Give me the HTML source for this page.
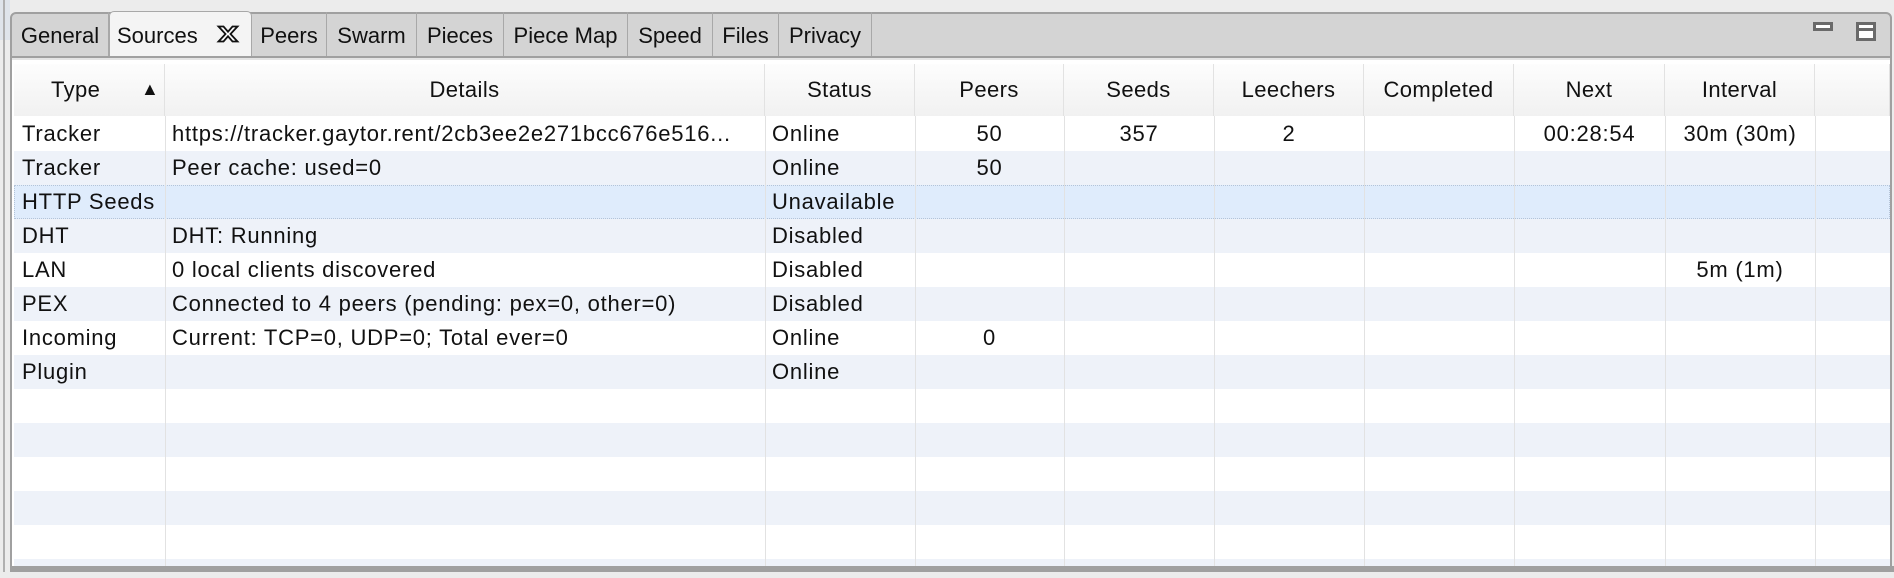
<!DOCTYPE html>
<html><head><meta charset="utf-8"><style>
body{margin:0;width:1894px;height:578px;background:#ececec;position:relative;overflow:hidden;font-family:"Liberation Sans",sans-serif;color:#111}
.abs{position:absolute}
#frame{left:10px;top:12px;width:1882px;height:559px;background:#d4d4d4;border:2px solid #a0a0a0;border-radius:6px 6px 0 0;box-sizing:border-box}
.tab{position:absolute;top:12px;height:45px;border-right:1px solid #a8a8a8;font-size:22px;line-height:48px;text-align:center;box-sizing:border-box}
.sel{background:#f4f4f4;border:1px solid #a8a8a8;border-bottom:none;border-radius:5px 5px 0 0;height:47px}
#panel{left:12px;top:58px;width:1878px;height:510px;background:#fff;border-top:2px solid #e4e4e4}
.row{position:absolute;left:14px;width:1876px;height:34px}
.cell{position:absolute;top:0;height:34px;line-height:34px;font-size:22px;letter-spacing:0.75px;white-space:nowrap}
.hd{position:absolute;top:64px;height:52px;line-height:52px;font-size:22px;letter-spacing:0.4px;text-align:center;background:linear-gradient(#fdfdfd,#f1f1f1);border-right:1px solid #e2e2e2;box-sizing:border-box}
.vl{position:absolute;top:116px;height:450px;width:1px;background:#e2e2e2}
</style></head><body>
<div class="abs" style="left:0;top:0;width:10px;height:40px;background:#dfe4ea"></div>
<div class="abs" style="left:3px;top:0;width:2px;height:578px;background:#b0b0b0"></div>
<div class="abs" id="frame"></div>
<div class="tab" style="left:12px;width:97px">General</div>
<div class="tab sel" style="left:109px;width:143px;top:11px;text-align:left;padding-left:7px">Sources</div>
<svg class="abs" style="left:216px;top:24px" width="24" height="20" viewBox="0 0 24 20"><path d="M2.5 2.5h5l4.5 5.2 4.5-5.2h5l-7 7.5 7 7.5h-5l-4.5-5.2-4.5 5.2h-5l7-7.5z" fill="#fff" stroke="#111" stroke-width="1.8" stroke-linejoin="miter"/></svg>
<div class="tab" style="left:252px;width:75px">Peers</div>
<div class="tab" style="left:327px;width:90px">Swarm</div>
<div class="tab" style="left:417px;width:87px">Pieces</div>
<div class="tab" style="left:504px;width:124px">Piece Map</div>
<div class="tab" style="left:628px;width:85px">Speed</div>
<div class="tab" style="left:713px;width:66px">Files</div>
<div class="tab" style="left:779px;width:93px">Privacy</div>
<div class="abs" style="left:1813px;top:22px;width:14px;height:3px;border:3px solid #6a6a6a;background:#fff"></div>
<div class="abs" style="left:1856px;top:22px;width:14px;height:13px;border:3px solid #6a6a6a;background:#fff;box-shadow:inset 0 3px 0 #fff,inset 0 6px 0 #6a6a6a"></div>
<div class="abs" style="left:10px;top:56px;width:1882px;height:2px;background:#a0a0a0"></div>
<div class="abs" id="panel"></div>
<div class="hd" style="left:14px;width:151px"></div>
<div class="abs" style="left:51px;top:64px;line-height:52px;font-size:22px;letter-spacing:0.4px">Type</div>
<div class="abs" style="left:141px;top:64px;line-height:50px;font-size:18px">&#9650;</div>
<div class="hd" style="left:165px;width:600px">Details</div>
<div class="hd" style="left:765px;width:150px">Status</div>
<div class="hd" style="left:915px;width:149px">Peers</div>
<div class="hd" style="left:1064px;width:150px">Seeds</div>
<div class="hd" style="left:1214px;width:150px">Leechers</div>
<div class="hd" style="left:1364px;width:150px">Completed</div>
<div class="hd" style="left:1514px;width:151px">Next</div>
<div class="hd" style="left:1665px;width:150px">Interval</div>
<div class="hd" style="left:1815px;width:75px"></div>
<div class="row" style="top:117px;background:#fff"></div>
<div class="row" style="top:151px;background:#eef2f9"></div>
<div class="row" style="top:185px;background:#dfecfc;border:1px dotted #b4c4d8;box-sizing:border-box"></div>
<div class="row" style="top:219px;background:#eef2f9"></div>
<div class="row" style="top:253px;background:#fff"></div>
<div class="row" style="top:287px;background:#eef2f9"></div>
<div class="row" style="top:321px;background:#fff"></div>
<div class="row" style="top:355px;background:#eef2f9"></div>
<div class="row" style="top:389px;background:#fff"></div>
<div class="row" style="top:423px;background:#eef2f9"></div>
<div class="row" style="top:457px;background:#fff"></div>
<div class="row" style="top:491px;background:#eef2f9"></div>
<div class="row" style="top:525px;background:#fff"></div>
<div class="row" style="top:559px;height:7px;background:#eef2f9"></div>
<div class="vl" style="left:165px"></div><div class="vl" style="left:765px"></div><div class="vl" style="left:915px"></div><div class="vl" style="left:1064px"></div><div class="vl" style="left:1214px"></div><div class="vl" style="left:1364px"></div><div class="vl" style="left:1514px"></div><div class="vl" style="left:1665px"></div><div class="vl" style="left:1815px"></div>
<div class="abs" style="top:117px;left:0;width:1894px;height:34px">
 <div class="cell" style="left:22px">Tracker</div><div class="cell" style="left:172px">https://tracker.gaytor.rent/2cb3ee2e271bcc676e516...</div><div class="cell" style="left:772px">Online</div>
 <div class="cell" style="left:915px;width:149px;text-align:center">50</div><div class="cell" style="left:1064px;width:150px;text-align:center">357</div><div class="cell" style="left:1214px;width:150px;text-align:center">2</div><div class="cell" style="left:1514px;width:151px;text-align:center">00:28:54</div><div class="cell" style="left:1665px;width:150px;text-align:center">30m (30m)</div></div>
<div class="abs" style="top:151px;left:0;width:1894px;height:34px">
 <div class="cell" style="left:22px">Tracker</div><div class="cell" style="left:172px">Peer cache: used=0</div><div class="cell" style="left:772px">Online</div><div class="cell" style="left:915px;width:149px;text-align:center">50</div></div>
<div class="abs" style="top:185px;left:0;width:1894px;height:34px">
 <div class="cell" style="left:22px">HTTP Seeds</div><div class="cell" style="left:772px">Unavailable</div></div>
<div class="abs" style="top:219px;left:0;width:1894px;height:34px">
 <div class="cell" style="left:22px">DHT</div><div class="cell" style="left:172px">DHT: Running</div><div class="cell" style="left:772px">Disabled</div></div>
<div class="abs" style="top:253px;left:0;width:1894px;height:34px">
 <div class="cell" style="left:22px">LAN</div><div class="cell" style="left:172px">0 local clients discovered</div><div class="cell" style="left:772px">Disabled</div><div class="cell" style="left:1665px;width:150px;text-align:center">5m (1m)</div></div>
<div class="abs" style="top:287px;left:0;width:1894px;height:34px">
 <div class="cell" style="left:22px">PEX</div><div class="cell" style="left:172px">Connected to 4 peers (pending: pex=0, other=0)</div><div class="cell" style="left:772px">Disabled</div></div>
<div class="abs" style="top:321px;left:0;width:1894px;height:34px">
 <div class="cell" style="left:22px">Incoming</div><div class="cell" style="left:172px">Current: TCP=0, UDP=0; Total ever=0</div><div class="cell" style="left:772px">Online</div><div class="cell" style="left:915px;width:149px;text-align:center">0</div></div>
<div class="abs" style="top:355px;left:0;width:1894px;height:34px">
 <div class="cell" style="left:22px">Plugin</div><div class="cell" style="left:772px">Online</div></div>
<div class="abs" style="left:10px;top:566px;width:1884px;height:6px;background:#a0a0a0"></div>
<div class="abs" style="left:0;top:572px;width:1894px;height:6px;background:#ececec"></div>
</body></html>
